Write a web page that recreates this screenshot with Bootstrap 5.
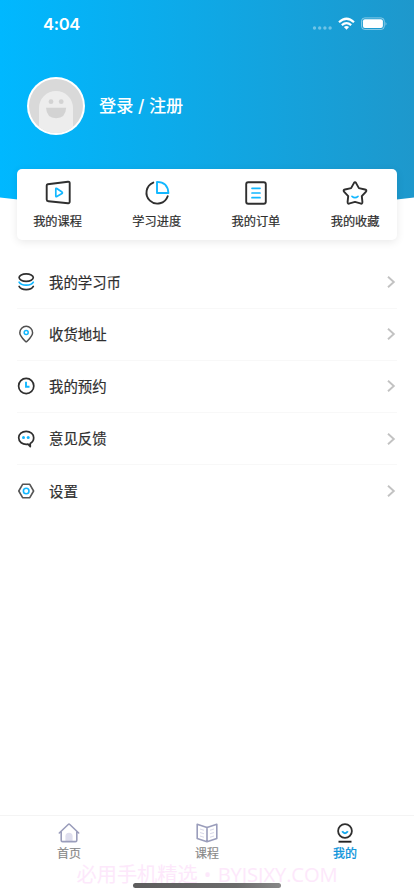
<!DOCTYPE html>
<html lang="zh-CN">
<head>
<meta charset="utf-8">
<meta name="viewport" content="width=device-width, initial-scale=1">
<title>我的</title>
<link href="https://cdn.jsdelivr.net/npm/bootstrap@5.3.0/dist/css/bootstrap.min.css" rel="stylesheet">
<style>
body{font-family:Inter,"Noto Sans CJK SC",sans-serif;color:#2f2f2f;background:#fff}
.phone{width:414px;height:896px}
.phone svg{display:block;flex:none}
.hero{height:169px}
.hero-bg{height:214px;width:414px;left:0;top:0;background:linear-gradient(90deg,#00b8ff,#1e98cc);clip-path:path("M0 0H414V197.500Q207 224 0 197.500Z")}
.statusbar{height:48px;padding-left:43px;padding-right:27px}
.clock{font:600 16.6px/20px Inter,sans-serif;letter-spacing:-.35px}
.profile{height:115px;padding-left:27px;gap:14px}
.login{font-size:17.2px;font-weight:500;line-height:24px;white-space:pre;padding-top:1px}
.shortcuts{height:71px;margin:0 17px;border-radius:5px;box-shadow:0 2px 9px rgba(0,0,0,.09);padding-top:9px;justify-content:center}
.shortcuts>a{width:99.2px;flex:none;font-size:12.2px;line-height:18px;gap:5px;position:relative;right:.7px;-webkit-text-stroke:.2px}
.menu{padding:16.400px 17px 0;flex:1}
.menu a{height:52.200px;border-bottom:1px solid #f8f8f8;font-size:14.400px;gap:14px;-webkit-text-stroke:.2px}
.menu a:last-child{border-bottom:0}
.menu span{padding-top:1px}
.tabs{height:81px;border-top:1px solid #f4f4f4}
.tabs a{padding-top:5.500px;font-size:12px;line-height:18px;color:#888;gap:1px;width:33.333%;-webkit-text-stroke:.15px}
.tabs a.current{color:#1296db;font-weight:500}
.wm{left:76.500px;top:859px;font:20.200px/30px "Noto Sans CJK SC",sans-serif;color:#fde8fb;white-space:nowrap;pointer-events:none}
.wm .dot{display:inline-block;width:20px;text-align:center;font-family:"Open Sans",sans-serif}
.wm .site{font:20.200px/30px "Open Sans",sans-serif;letter-spacing:-.1px}
.homebar{left:133px;top:883px;width:148px;height:5px;border-radius:3px;background:linear-gradient(90deg,#5d5d5d,#6b6b6b 70%,#888)}
.ink{stroke:#2f2f2f;fill:none;stroke-linecap:round;stroke-linejoin:round}
.sky{stroke:#12b7ff;fill:none;stroke-linecap:round;stroke-linejoin:round}
.mauve{stroke:#9a9dbb;fill:none;stroke-linecap:round;stroke-linejoin:round}
</style>
<script src="https://cdn.jsdelivr.net/npm/bootstrap@5.3.0/dist/js/bootstrap.bundle.min.js"></script>
</head>
<body>
<div class="phone position-relative overflow-hidden d-flex flex-column">
<div class="hero-bg position-absolute"></div>
<header class="hero position-relative text-white">
 <div class="statusbar d-flex justify-content-between align-items-center">
  <span class="clock">4:04</span>
  <svg width="75" height="16" viewBox="0 0 75 16">
   <g fill="#fff" fill-opacity=".38"><circle cx="2.500" cy="12" r="1.700"/><circle cx="7.700" cy="12" r="1.700"/><circle cx="12.900" cy="12" r="1.700"/><circle cx="18.100" cy="12" r="1.700"/></g>
   <g fill="none" stroke="#fff" stroke-width="2.200"><path d="M27 6.200Q34.500 -.7 42 6.200"/><path d="M29.800 9.100Q34.500 5 39.200 9.100"/></g><path d="M31.900 11.100Q34.500 9 37.100 11.100L34.500 13.700Z" fill="#fff"/>
   <rect x="49.500" y="1.900" width="22.800" height="11.600" rx="3.300" fill="none" stroke="#fff" stroke-opacity=".5" stroke-width=".9"/><rect x="50.900" y="3.300" width="20" height="8.800" rx="2" fill="#fff"/><path d="M73.600 6v3.700q1.600-1.850 0-3.700" fill="#fff" fill-opacity=".6"/>
  </svg>
 </div>
 <div class="profile d-flex align-items-center">
  <svg width="58" height="58" viewBox="0 0 58 58">
   <defs><clipPath id="face"><circle cx="29" cy="29" r="27"/></clipPath></defs>
   <circle cx="29" cy="29" r="29" fill="#fff"/><circle cx="29" cy="29" r="27" fill="#d9d9d9"/>
   <g clip-path="url(#face)"><path d="M12 58V31a17 17 0 0 1 34 0v27Z" fill="#ededed"/><circle cx="24" cy="24.700" r="2.400" fill="#d3d3d3"/><circle cx="34.200" cy="24.700" r="2.400" fill="#d3d3d3"/><path d="M19 30.700h20.200Q38.500 41.200 29.100 41.200T19 30.700Z" fill="#d3d3d3"/></g>
  </svg>
  <a class="login text-white text-decoration-none">登录 / 注册</a>
 </div>
</header>
<nav class="shortcuts position-relative bg-white d-flex">
 <a class="d-flex flex-column align-items-center text-reset text-decoration-none">
  <svg width="30" height="30" viewBox="0 0 30 30"><path class="ink" stroke-width="1.900" d="M4.700 6.200 25 3.800Q26.700 3.600 26.700 5.300V23.600Q26.700 25.400 25 25.200L5.500 23.300Q3.700 23.100 3.700 21.500V7.500Q3.700 6.400 4.700 6.200Z"/><path class="sky" stroke-width="1.700" d="M12.800 10.900Q12.800 9.900 13.800 10.500L19 14Q19.900 14.900 19 15.600L13.800 18.600Q12.800 19 12.800 18Z"/></svg>
  我的课程</a>
 <a class="d-flex flex-column align-items-center text-reset text-decoration-none">
  <svg width="30" height="30" viewBox="0 0 30 30"><path class="ink" stroke-width="1.900" d="M11.300 4.600A10.900 10.900 0 1 0 25.700 18.200"/><path class="sky" stroke-width="1.900" d="M15 3.900Q25.700 4 26.400 15H15Z"/></svg>
  学习进度</a>
 <a class="d-flex flex-column align-items-center text-reset text-decoration-none">
  <svg width="30" height="30" viewBox="0 0 30 30"><rect class="ink" x="5.200" y="4.200" width="19.600" height="21.600" rx="2" stroke-width="1.900"/><path class="sky" stroke-width="1.700" d="M11 10.300h8M11 15h8M11 19.700h8"/></svg>
  我的订单</a>
 <a class="d-flex flex-column align-items-center text-reset text-decoration-none">
  <svg width="30" height="30" viewBox="0 0 30 30"><path class="ink" stroke-width="1.900" d="M13.900 5.100Q15 3.300 16.100 5.100L18.900 10.100 25 11.500Q27.300 12.100 25.800 13.800L21.800 18.200 22.400 23.900Q22.500 26.400 20.300 25.400L15 23.900 9.700 25.400Q7.500 26.400 7.600 23.900L8.200 18.200 4.200 13.800Q2.700 12.100 5 11.500L11.100 10.100Z"/><path class="sky" stroke-width="1.700" d="M12 18.300Q15 20.900 18 18.300"/></svg>
  我的收藏</a>
</nav>
<main class="menu d-flex flex-column">
 <a class="d-flex align-items-center text-reset text-decoration-none"><svg width="18" height="18" viewBox="0 0 18 18"><ellipse class="ink" cx="9.200" cy="4.600" rx="7.100" ry="3.700" stroke-width="1.700"/><path class="sky" stroke-width="1.700" d="M2.100 9.200C4.200 13.200 14.200 13.200 16.300 9.200"/><path class="ink" stroke-width="1.700" d="M2.100 13.400C4.200 17.700 14.200 17.700 16.300 13.400"/></svg><span class="flex-grow-1">我的学习币</span><svg width="11" height="14" viewBox="0 0 11 14"><path d="M2 1.800 7.800 7 2 12.200" fill="none" stroke="#c2c2c2" stroke-width="1.900"/></svg></a>
 <a class="d-flex align-items-center text-reset text-decoration-none"><svg width="18" height="18" viewBox="0 0 18 18"><path d="M9.200 1.300A6.400 6.400 0 0 1 15.600 7.700C15.600 11 11.700 14.500 9.900 16.500Q9.200 17.100 8.500 16.500C6.700 14.500 2.800 11 2.800 7.700A6.400 6.400 0 0 1 9.200 1.300Z" fill="none" stroke="#505050" stroke-width="1.500"/><circle class="sky" cx="9.200" cy="7.600" r="2" stroke-width="1.500"/></svg><span class="flex-grow-1">收货地址</span><svg width="11" height="14" viewBox="0 0 11 14"><path d="M2 1.800 7.800 7 2 12.200" fill="none" stroke="#c2c2c2" stroke-width="1.900"/></svg></a>
 <a class="d-flex align-items-center text-reset text-decoration-none"><svg width="18" height="18" viewBox="0 0 18 18"><circle class="ink" cx="9.200" cy="9" r="7.600" stroke-width="1.700"/><path d="M9 4.800V9.800H12.500" stroke="#12b7ff" stroke-width="1.900" fill="none"/></svg><span class="flex-grow-1">我的预约</span><svg width="11" height="14" viewBox="0 0 11 14"><path d="M2 1.800 7.800 7 2 12.200" fill="none" stroke="#c2c2c2" stroke-width="1.900"/></svg></a>
 <a class="d-flex align-items-center text-reset text-decoration-none"><svg width="18" height="18" viewBox="0 0 18 18"><path class="ink" stroke-width="1.700" d="M13.200 13.400 13.300 16.600 11 14.200C5.200 15 1.700 11.700 1.700 7.700 1.700 4 5 1.300 9.200 1.300S16.700 4 16.700 7.700C16.700 10.100 15.300 12.300 13.200 13.400Z"/><circle cx="6.500" cy="7.400" r="1.500" fill="#12b7ff"/><circle cx="11.200" cy="7.400" r="1.500" fill="#12b7ff"/></svg><span class="flex-grow-1">意见反馈</span><svg width="11" height="14" viewBox="0 0 11 14"><path d="M2 1.800 7.800 7 2 12.200" fill="none" stroke="#c2c2c2" stroke-width="1.900"/></svg></a>
 <a class="d-flex align-items-center text-reset text-decoration-none"><svg width="18" height="18" viewBox="0 0 18 18"><path d="M5.600 2.300H12.800L16.600 9 12.800 15.700H5.600L1.800 9Z" fill="none" stroke="#555" stroke-width="1.600" stroke-linejoin="round"/><circle class="sky" cx="9.200" cy="9" r="2.800" stroke-width="1.600"/></svg><span class="flex-grow-1">设置</span><svg width="11" height="14" viewBox="0 0 11 14"><path d="M2 1.800 7.800 7 2 12.200" fill="none" stroke="#c2c2c2" stroke-width="1.900"/></svg></a>
</main>
<footer class="tabs d-flex">
 <a class="d-flex flex-column align-items-center text-decoration-none"><svg width="24" height="22" viewBox="0 0 24 22"><path d="M8.400 19.500V14.200Q8.400 10.700 12 10.700T15.600 14.200V19.500Z" fill="#dfdfee"/><path class="mauve" stroke-width="1.600" d="M4.200 9.700V18.200Q4.200 19.600 5.600 19.600H18.400Q19.800 19.600 19.800 18.200V9.700M2.300 11 11.200 2.500Q12 1.800 12.800 2.500L21.700 11"/></svg>首页</a>
 <a class="d-flex flex-column align-items-center text-decoration-none"><svg width="24" height="22" viewBox="0 0 24 22"><path class="mauve" stroke-width="1.600" d="M2.200 2.300 12 5.400 21.800 2.300V16.500L12 19.800 2.200 16.500ZM12 5.400V19.500"/><path stroke="#d9d9e9" stroke-width="1.200" fill="none" d="M5 7 9 8.200M5 10.500 9 11.700M5 14 9 15.200M15 8.200 19 7M15 11.700 19 10.500M15 15.200 19 14"/></svg>课程</a>
 <a class="current d-flex flex-column align-items-center text-decoration-none"><svg width="24" height="22" viewBox="0 0 24 22"><circle class="ink" cx="12" cy="9" r="6.900" stroke-width="1.800"/><path d="M9.200 9.300Q12 13.300 14.800 9.300" fill="none" stroke="#12a9ee" stroke-width="2"/><path d="M5.500 19.700H18.500" stroke="#222" stroke-width="1.900"/></svg>我的</a>
</footer>
<div class="wm position-absolute">必用手机精选<span class="dot">•</span><span class="site">BYJSJXY.COM</span></div>
<div class="homebar position-absolute"></div>
</div>
</body>
</html>
